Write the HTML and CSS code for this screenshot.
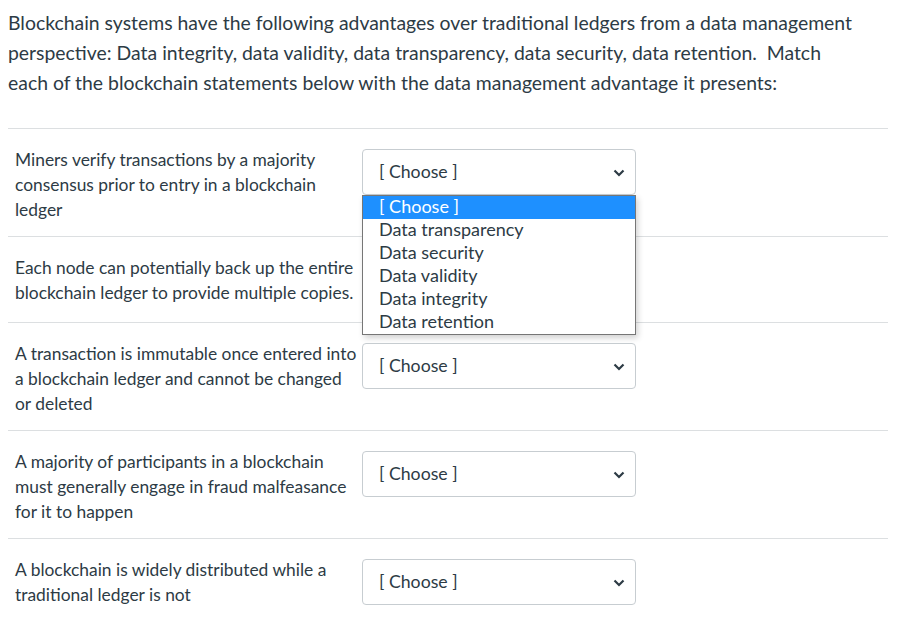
FILE: index.html
```html
<!DOCTYPE html>
<html>
<head>
<meta charset="utf-8">
<link rel="stylesheet" href="styles.css">
</head>
<body>
<p class="intro">Blockchain systems have the following advantages over traditional ledgers from a data management perspective: Data integrity, data validity, data transparency, data security, data retention.&nbsp; Match each of the blockchain statements below with the data management advantage it presents:</p>
<div class="rows">
  <div class="row">
    <div class="stmt">Miners verify transactions by a majority consensus prior to entry in a blockchain ledger</div>
    <div class="answer">
      <div class="select"><span>[ Choose ]</span><svg class="chev" width="12" height="8" viewBox="0 0 12 8"><path d="M1.5 1.5 L6 6 L10.5 1.5" fill="none" stroke="#2d3b45" stroke-width="2.2"/></svg></div>
      <ul class="list">
        <li class="sel">[ Choose ]</li>
        <li>Data transparency</li>
        <li>Data security</li>
        <li>Data validity</li>
        <li>Data integrity</li>
        <li>Data retention</li>
      </ul>
    </div>
  </div>
  <div class="row">
    <div class="stmt">Each node can potentially back up the entire blockchain ledger to provide multiple copies.</div>
    <div class="answer">
      <div class="select"><span>[ Choose ]</span><svg class="chev" width="12" height="8" viewBox="0 0 12 8"><path d="M1.5 1.5 L6 6 L10.5 1.5" fill="none" stroke="#2d3b45" stroke-width="2.2"/></svg></div>
    </div>
  </div>
  <div class="row">
    <div class="stmt">A transaction is immutable once entered into a blockchain ledger and cannot be changed or deleted</div>
    <div class="answer">
      <div class="select"><span>[ Choose ]</span><svg class="chev" width="12" height="8" viewBox="0 0 12 8"><path d="M1.5 1.5 L6 6 L10.5 1.5" fill="none" stroke="#2d3b45" stroke-width="2.2"/></svg></div>
    </div>
  </div>
  <div class="row">
    <div class="stmt">A majority of participants in a blockchain must generally engage in fraud malfeasance for it to happen</div>
    <div class="answer">
      <div class="select"><span>[ Choose ]</span><svg class="chev" width="12" height="8" viewBox="0 0 12 8"><path d="M1.5 1.5 L6 6 L10.5 1.5" fill="none" stroke="#2d3b45" stroke-width="2.2"/></svg></div>
    </div>
  </div>
  <div class="row">
    <div class="stmt">A blockchain is widely distributed while a traditional ledger is not</div>
    <div class="answer">
      <div class="select"><span>[ Choose ]</span><svg class="chev" width="12" height="8" viewBox="0 0 12 8"><path d="M1.5 1.5 L6 6 L10.5 1.5" fill="none" stroke="#2d3b45" stroke-width="2.2"/></svg></div>
    </div>
  </div>
</div>
</body>
</html>
```
FILE: styles.css
```css
html, body {
  background: #ffffff;
}
body {
  margin: 8px;
  font-family: Lato, "Noto Sans", sans-serif;
  color: #2d3b45;
}
.intro {
  margin: 0 0 30px 0;
  font-size: 19.4px;
  line-height: 30px;
  width: 850px;
}
.rows {
  width: 880px;
  border-top: 1px solid #dcdfe1;
}
.row {
  display: flex;
  align-items: flex-start;
  gap: 2px;
  padding: 18px 0 14px 7px;
  border-bottom: 1px solid #dcdfe1;
}
.row:last-child {
  border-bottom: none;
}
.stmt {
  width: 345px;
  font-size: 17.4px;
  line-height: 25px;
}
.answer {
  position: relative;
  margin: 2px 0 5px 0;
}
.select {
  box-sizing: border-box;
  width: 274px;
  height: 46px;
  border: 1px solid #c7cdd1;
  border-radius: 4px;
  display: flex;
  align-items: center;
  justify-content: space-between;
  padding: 0 10px 0 16px;
  font-size: 17.7px;
}
.select span {
  margin-top: -1px;
}
.chev {
  margin-top: 2px;
}
.list {
  position: absolute;
  left: 0;
  top: 46px;
  box-sizing: border-box;
  width: 274px;
  margin: 0;
  padding: 0;
  list-style: none;
  background: #ffffff;
  border: 1px solid #767676;
  box-shadow: 2px 3px 6px rgba(0, 0, 0, 0.18);
  font-size: 18px;
  z-index: 2;
}
.list li {
  box-sizing: border-box;
  height: 23px;
  line-height: 20px;
  padding: 0 0 3px 16px;
}
.list li.sel {
  background: #1e90ff;
  color: #ffffff;
}
```
